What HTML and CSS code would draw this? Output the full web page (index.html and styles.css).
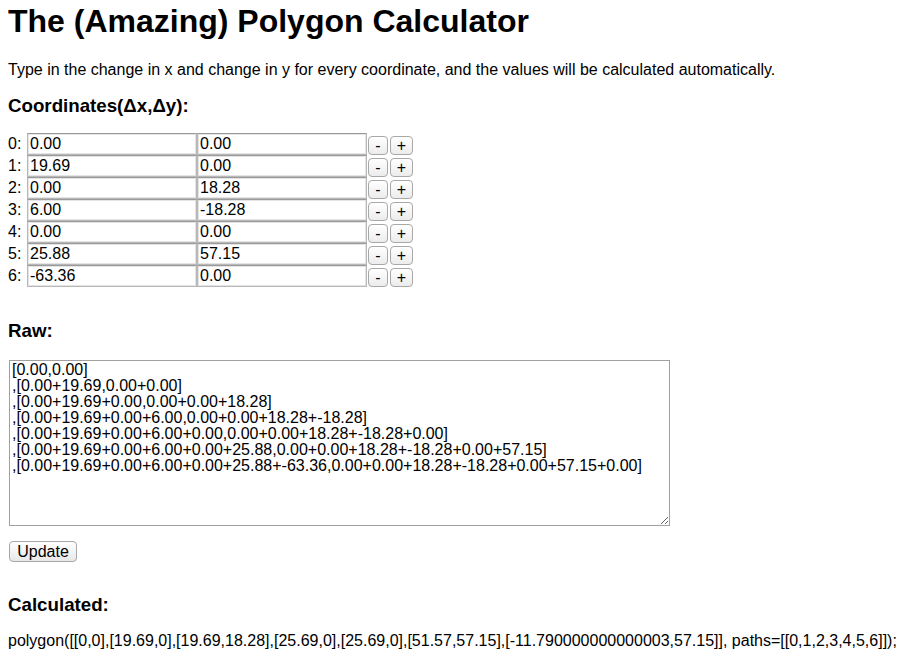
FILE: index.html
```html
<!DOCTYPE html>
<html>
<head>
<meta charset="utf-8">
<title>The (Amazing) Polygon Calculator</title>
<link rel="stylesheet" href="styles.css">
</head>
<body>
<div class="page">
  <h1 class="title">The (Amazing) Polygon Calculator</h1>
  <p class="intro">Type in the change in x and change in y for every coordinate, and the values will be calculated automatically.</p>
  <h3 class="heading coords-heading">Coordinates(Δx,Δy):</h3>
  <div class="coords">
    <div class="row"><span class="idx">0:</span><input class="field" value="0.00"><input class="field" value="0.00"><button class="mini minus">-</button><button class="mini plus">+</button></div>
    <div class="row"><span class="idx">1:</span><input class="field" value="19.69"><input class="field" value="0.00"><button class="mini minus">-</button><button class="mini plus">+</button></div>
    <div class="row"><span class="idx">2:</span><input class="field" value="0.00"><input class="field" value="18.28"><button class="mini minus">-</button><button class="mini plus">+</button></div>
    <div class="row"><span class="idx">3:</span><input class="field" value="6.00"><input class="field" value="-18.28"><button class="mini minus">-</button><button class="mini plus">+</button></div>
    <div class="row"><span class="idx">4:</span><input class="field" value="0.00"><input class="field" value="0.00"><button class="mini minus">-</button><button class="mini plus">+</button></div>
    <div class="row"><span class="idx">5:</span><input class="field" value="25.88"><input class="field" value="57.15"><button class="mini minus">-</button><button class="mini plus">+</button></div>
    <div class="row"><span class="idx">6:</span><input class="field" value="-63.36"><input class="field" value="0.00"><button class="mini minus">-</button><button class="mini plus">+</button></div>
  </div>
  <h3 class="heading raw-heading">Raw:</h3>
  <textarea class="raw">[0.00,0.00]
,[0.00+19.69,0.00+0.00]
,[0.00+19.69+0.00,0.00+0.00+18.28]
,[0.00+19.69+0.00+6.00,0.00+0.00+18.28+-18.28]
,[0.00+19.69+0.00+6.00+0.00,0.00+0.00+18.28+-18.28+0.00]
,[0.00+19.69+0.00+6.00+0.00+25.88,0.00+0.00+18.28+-18.28+0.00+57.15]
,[0.00+19.69+0.00+6.00+0.00+25.88+-63.36,0.00+0.00+18.28+-18.28+0.00+57.15+0.00]</textarea>
  <div class="actions"><button class="update">Update</button></div>
  <h3 class="heading calc-heading">Calculated:</h3>
  <p class="result">polygon([[0,0],[19.69,0],[19.69,18.28],[25.69,0],[25.69,0],[51.57,57.15],[-11.790000000000003,57.15]], paths=[[0,1,2,3,4,5,6]]);</p>
</div>
</body>
</html>
```
FILE: styles.css
```css
html, body {
  margin: 0;
  padding: 0;
  background: #ffffff;
}
body {
  font-family: "Liberation Sans", Arial, Helvetica, sans-serif;
  color: #000;
}
.page {
  padding: 3px 8px 0 8px;
}
.title {
  font-size: 32px;
  font-weight: bold;
  line-height: 37px;
  margin: 0 0 21px 0;
}
.intro {
  font-size: 16px;
  line-height: 17px;
  margin: 0 0 18px 0;
}
.heading {
  font-size: 18.72px;
  font-weight: bold;
  line-height: 20px;
  margin: 0;
}
.coords-heading {
  margin-bottom: 17px;
}
.coords {
  display: flex;
  flex-direction: column;
}
.row {
  display: flex;
  align-items: flex-start;
  height: 22px;
}
.idx {
  width: 19px;
  font-size: 16px;
  line-height: 22px;
}
.field {
  box-sizing: border-box;
  width: 170px;
  height: 22px;
  margin: 0;
  padding: 1px 2px;
  font-family: "Liberation Sans", Arial, sans-serif;
  font-size: 16px;
  line-height: 16px;
  border: 1px solid #b8b8b8;
  border-top-color: #9a9a9a;
  box-shadow: inset 0 0 0 1px #e4e4e4;
  background: #fff;
  color: #000;
  outline: none;
}
.mini {
  box-sizing: border-box;
  height: 19px;
  margin-top: 3px;
  padding: 0;
  font-family: "Liberation Sans", Arial, sans-serif;
  font-size: 16px;
  line-height: 15px;
  border: 1px solid #a8a8a8;
  border-radius: 4px;
  background: linear-gradient(#ffffff, #ececec);
  color: #000;
}
.minus {
  width: 20px;
  margin-left: 1px;
}
.plus {
  width: 23px;
  margin-left: 2px;
}
.raw-heading {
  margin-top: 34px;
  margin-bottom: 19px;
}
.raw {
  box-sizing: border-box;
  display: block;
  width: 661px;
  height: 166px;
  margin: 0 0 0 1px;
  padding: 1px 2px;
  font-family: "Liberation Sans", Arial, sans-serif;
  font-size: 16px;
  line-height: 16px;
  border: 1px solid #a0a0a0;
  color: #000;
  background: #fff;
}
.actions {
  display: flex;
  margin-top: 15px;
}
.update {
  box-sizing: border-box;
  width: 68px;
  height: 21px;
  padding: 0;
  margin-left: 1px;
  font-family: "Liberation Sans", Arial, sans-serif;
  font-size: 16px;
  line-height: 17px;
  border: 1px solid #a8a8a8;
  border-radius: 4px;
  background: linear-gradient(#ffffff, #e8e8e8);
  color: #000;
}
.calc-heading {
  margin-top: 33px;
}
.result {
  font-size: 16px;
  line-height: 17px;
  margin: 17px 0 0 0;
}
```
